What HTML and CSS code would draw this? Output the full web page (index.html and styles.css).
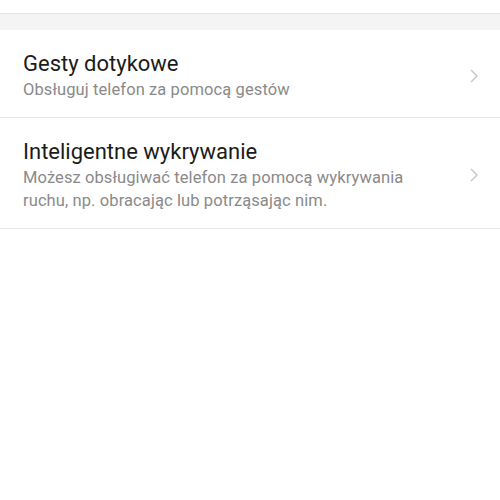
FILE: index.html
```html
<!DOCTYPE html>
<html lang="pl">
<head>
<meta charset="utf-8">
<title>Gesty i ruch</title>
<link rel="stylesheet" href="styles.css">
</head>
<body>
<div class="top"></div>
<div class="band"></div>
<ul class="list">
	<li class="item">
		<div class="text">
			<div class="title">Gesty dotykowe</div>
			<div class="sub">Obsługuj telefon za pomocą gestów</div>
		</div>
		<svg class="arrow" width="8" height="14" viewBox="0 0 8 14"><polyline points="1,1 7,7 1,13" fill="none" stroke="#c6c6c6" stroke-width="1.4"/></svg>
	</li>
	<li class="item">
		<div class="text">
			<div class="title">Inteligentne wykrywanie</div>
			<div class="sub">Możesz obsługiwać telefon za pomocą wykrywania ruchu, np. obracając lub potrząsając nim.</div>
		</div>
		<svg class="arrow" width="8" height="14" viewBox="0 0 8 14"><polyline points="1,1 7,7 1,13" fill="none" stroke="#c6c6c6" stroke-width="1.4"/></svg>
	</li>
</ul>
</body>
</html>
```
FILE: styles.css
```css
body{ margin:0; background:#fff; font-family:Roboto,"Noto Sans",sans-serif;}
ul{ margin:0; padding:0;}
li{ list-style:none;}

.top{ height:13px; border-bottom:1px solid #e4e4e4;}
.band{ height:16px; background:#f4f4f4;}

.item{ display:flex; align-items:center; padding:20px 22px 15px 23px; border-bottom:1px solid #e6e6e6;}
.text{ flex:1; max-width:400px;}
.title{ font-size:22px; line-height:28px; color:#1b1b1b;}
.sub{ font-size:16.5px; line-height:23.5px; color:#8a8a8a; letter-spacing:0.1px;}
.arrow{ flex:none; margin-left:auto;}
```
